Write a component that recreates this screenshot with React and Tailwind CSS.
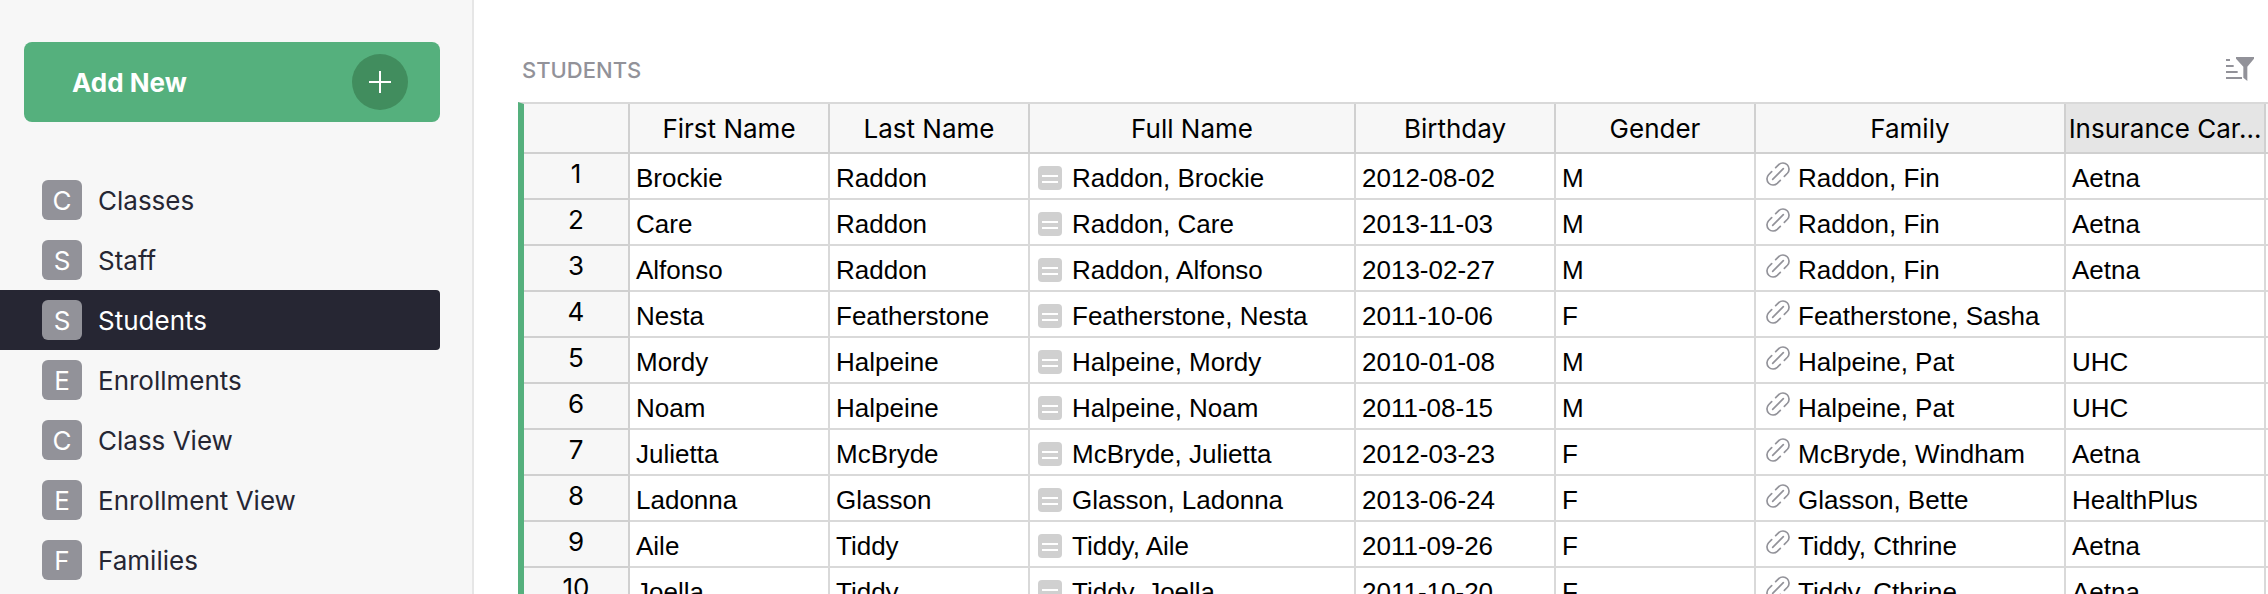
const pages = [
  "Classes",
  "Staff",
  "Students",
  "Enrollments",
  "Class View",
  "Enrollment View",
  "Families",
];

const columns = [
  { label: "First Name" },
  { label: "Last Name" },
  { label: "Full Name" },
  { label: "Birthday" },
  { label: "Gender" },
  { label: "Family" },
  { label: "Insurance Car…", selected: true },
];

const students = [
  ["Brockie", "Raddon", "2012-08-02", "M", "Raddon, Fin", "Aetna"],
  ["Care", "Raddon", "2013-11-03", "M", "Raddon, Fin", "Aetna"],
  ["Alfonso", "Raddon", "2013-02-27", "M", "Raddon, Fin", "Aetna"],
  ["Nesta", "Featherstone", "2011-10-06", "F", "Featherstone, Sasha", ""],
  ["Mordy", "Halpeine", "2010-01-08", "M", "Halpeine, Pat", "UHC"],
  ["Noam", "Halpeine", "2011-08-15", "M", "Halpeine, Pat", "UHC"],
  ["Julietta", "McBryde", "2012-03-23", "F", "McBryde, Windham", "Aetna"],
  ["Ladonna", "Glasson", "2013-06-24", "F", "Glasson, Bette", "HealthPlus"],
  ["Aile", "Tiddy", "2011-09-26", "F", "Tiddy, Cthrine", "Aetna"],
  ["Joella", "Tiddy", "2011-10-20", "F", "Tiddy, Cthrine", "Aetna"],
];

function PlusIcon() {
  return (
    <svg className="size-[22px]" viewBox="0 0 22 22" aria-hidden="true">
      <path d="M11 0v22M0 11h22" stroke="currentColor" strokeWidth="2" />
    </svg>
  );
}

function FilterIcon() {
  return (
    <svg className="h-6 w-7" viewBox="0 0 84 72" fill="currentColor" aria-hidden="true">
      <path d="M0 6h12v6H0zM0 24h23v6H0zM0 42h35v6H0zM0 60h48v6H0z" />
      <path d="M30 0h54v5L64 29v43L52 62V29L30 5z" />
    </svg>
  );
}

function FormulaIcon() {
  return (
    <svg className="size-6 shrink-0" viewBox="0 0 24 24" aria-hidden="true">
      <rect width="24" height="24" rx="4" fill="#d0d0d0" />
      <path d="M4 10h16M4 16h16" stroke="#fff" strokeWidth="2" />
    </svg>
  );
}

function LinkIcon() {
  return (
    <svg
      className="size-6 shrink-0"
      viewBox="0 0 72 72"
      fill="none"
      stroke="#929299"
      strokeWidth="5"
      strokeLinecap="round"
      aria-hidden="true"
    >
      <path d="M20 52 52 20" />
      <path d="M29 17 38.200 7.800A18.400 18.400 0 0 1 64.200 33.800L55 43" />
      <path d="M43 55 33.800 64.200A18.400 18.400 0 0 1 7.800 38.200L17 29" />
    </svg>
  );
}

function Cell({ children }) {
  return (
    <td className="h-[46px] border-r-2 border-b-2 border-[#d9d9d9] px-1.5 py-0 align-top">
      <div className="flex h-11 items-start pt-2 leading-8 whitespace-nowrap">{children}</div>
    </td>
  );
}

function Sidebar() {
  return (
    <aside className="w-[474px] shrink-0 border-r-2 border-[#e6e6e6] bg-[#f7f7f7] pt-[42px] pr-8">
      <div className="pl-6">
        <button
          type="button"
          className="flex h-20 w-full items-center justify-between rounded-lg bg-[#55b07d] pr-8 pl-12 text-[26px] font-bold text-white"
        >
          Add New
          <span className="flex size-14 items-center justify-center rounded-full bg-[#418d5e]">
            <PlusIcon />
          </span>
        </button>
      </div>
      <nav className="mt-12">
        <ul>
          {pages.map((page) => (
            <li key={page}>
              <a
                href="#"
                aria-current={page === "Students" ? "page" : undefined}
                className="flex h-[60px] items-center gap-4 rounded-r pl-[42px] text-[26px] text-[#262633] aria-[current=page]:bg-[#262633] aria-[current=page]:text-white"
              >
                <span className="flex size-10 items-center justify-center rounded-md bg-[#929299] text-white">
                  {page[0]}
                </span>
                {page}
              </a>
            </li>
          ))}
        </ul>
      </nav>
    </aside>
  );
}

function StudentTable() {
  return (
    <div className="overflow-hidden border-t-2 border-l-[6px] border-t-[#d9d9d9] border-l-[#55b07d]">
      <table className="w-full min-w-[1760px] table-fixed border-separate border-spacing-0 text-[26px] text-black">
        <colgroup>
          <col className="w-[106px]" />
          <col className="w-[200px]" />
          <col className="w-[200px]" />
          <col className="w-[326px]" />
          <col className="w-[200px]" />
          <col className="w-[200px]" />
          <col className="w-[310px]" />
          <col className="w-[200px]" />
          <col />
        </colgroup>
        <thead>
          <tr>
            <td className="h-[50px] border-r-2 border-b-2 border-[#d0d0d0] bg-[#f7f7f7] p-0" />
            {columns.map(({ label, selected }) => (
              <th
                key={label}
                scope="col"
                aria-selected={selected}
                className="h-[50px] border-r-2 border-b-2 border-[#d0d0d0] bg-[#f7f7f7] px-0 pt-0.5 pb-0 text-center leading-8 font-normal whitespace-nowrap aria-selected:bg-[#e5e5e5]"
              >
                {label}
              </th>
            ))}
            <td className="border-b-2 border-[#d0d0d0] bg-[#f7f7f7] p-0" />
          </tr>
        </thead>
        <tbody className="font-['Liberation_Sans',Arial,sans-serif]">
          {students.map(([first, last, birthday, gender, family, carrier], i) => (
            <tr key={first}>
              <th
                scope="row"
                className="h-[46px] border-r-2 border-b-2 border-[#d0d0d0] bg-[#f7f7f7] px-0 pt-1 pb-0 text-center align-top font-[Inter,sans-serif] leading-8 font-normal"
              >
                {i + 1}
              </th>
              <Cell>{first}</Cell>
              <Cell>{last}</Cell>
              <Cell>
                <span className="flex gap-2.5 pt-1 pl-0.5">
                  <FormulaIcon />
                  <span className="-mt-1">{`${last}, ${first}`}</span>
                </span>
              </Cell>
              <Cell>{birthday}</Cell>
              <Cell>{gender}</Cell>
              <Cell>
                <span className="flex gap-2 pl-1">
                  <LinkIcon />
                  {family}
                </span>
              </Cell>
              <Cell>{carrier}</Cell>
              <td className="border-b-2 border-[#d9d9d9] p-0" />
            </tr>
          ))}
        </tbody>
      </table>
    </div>
  );
}

export default function App() {
  return (
    <div className="flex h-screen overflow-hidden bg-white font-[Inter,sans-serif]">
      <Sidebar />
      <main className="min-w-0 flex-1 pt-[54px] pl-11">
        <header className="mb-4 flex h-8 items-center justify-between pr-3.5 pl-1 text-[#929299]">
          <h1 className="text-[22px] font-medium uppercase">Students</h1>
          <button type="button" aria-label="Sort and filter" className="-mt-0.5">
            <FilterIcon />
          </button>
        </header>
        <StudentTable />
      </main>
    </div>
  );
}
